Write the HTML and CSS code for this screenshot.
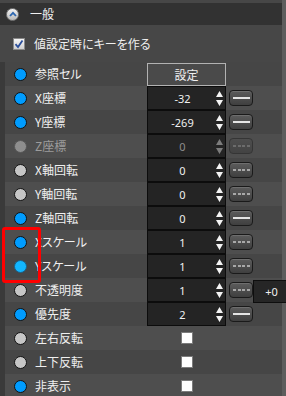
FILE: index.html
```html
<!DOCTYPE html>
<html lang="ja">
<head>
<meta charset="utf-8">
<link rel="stylesheet" href="styles.css">
</head>
<body>
<div class="panel">
  <div class="main">
    <div class="header">
      <span class="collapse"><svg width="8" height="6" viewBox="0 0 8 6"><path d="M1 5 L4 1.8 L7 5" fill="none" stroke="#2c66b0" stroke-width="1.8"/></svg></span>
      <span class="htitle">一般</span>
    </div>
    <div class="keyrow">
      <span class="cb"><svg width="10" height="10" viewBox="0 0 10 10"><path d="M1.5 5.2 L4 8 L8.5 1.5" fill="none" stroke="#2b4f9c" stroke-width="1.8"/></svg></span>
      <span class="keytxt">値設定時にキーを作る</span>
    </div>
    <div class="rows">
      <div class="row">
        <span class="dot blue"></span><span class="label">参照セル</span><span class="setbtn">設定</span>
      </div>
      <div class="row">
        <span class="dot blue"></span><span class="label">X座標</span>
        <span class="spin"><span class="val">-32</span><svg class="arrows" width="7" height="16" viewBox="0 0 7 16"><path d="M3.5 1 L7 7 L0 7Z M0 10 L7 10 L3.5 16Z"/></svg></span>
        <span class="kbtn"><span class="line"></span></span>
      </div>
      <div class="row">
        <span class="dot blue"></span><span class="label">Y座標</span>
        <span class="spin"><span class="val">-269</span><svg class="arrows" width="7" height="16" viewBox="0 0 7 16"><path d="M3.5 1 L7 7 L0 7Z M0 10 L7 10 L3.5 16Z"/></svg></span>
        <span class="kbtn"><span class="line"></span></span>
      </div>
      <div class="row disabled">
        <span class="dot off"></span><span class="label">Z座標</span>
        <span class="spin"><span class="val">0</span><svg class="arrows" width="7" height="16" viewBox="0 0 7 16"><path d="M3.5 1 L7 7 L0 7Z M0 10 L7 10 L3.5 16Z"/></svg></span>
        <span class="kbtn"><span class="dash"></span></span>
      </div>
      <div class="row">
        <span class="dot gray"></span><span class="label">X軸回転</span>
        <span class="spin"><span class="val">0</span><svg class="arrows" width="7" height="16" viewBox="0 0 7 16"><path d="M3.5 1 L7 7 L0 7Z M0 10 L7 10 L3.5 16Z"/></svg></span>
        <span class="kbtn"><span class="dash"></span></span>
      </div>
      <div class="row">
        <span class="dot gray"></span><span class="label">Y軸回転</span>
        <span class="spin"><span class="val">0</span><svg class="arrows" width="7" height="16" viewBox="0 0 7 16"><path d="M3.5 1 L7 7 L0 7Z M0 10 L7 10 L3.5 16Z"/></svg></span>
        <span class="kbtn"><span class="dash"></span></span>
      </div>
      <div class="row">
        <span class="dot blue"></span><span class="label">Z軸回転</span>
        <span class="spin"><span class="val">0</span><svg class="arrows" width="7" height="16" viewBox="0 0 7 16"><path d="M3.5 1 L7 7 L0 7Z M0 10 L7 10 L3.5 16Z"/></svg></span>
        <span class="kbtn"><span class="line"></span></span>
      </div>
      <div class="row">
        <span class="dot blue"></span><span class="label">Xスケール</span>
        <span class="spin"><span class="val">1</span><svg class="arrows" width="7" height="16" viewBox="0 0 7 16"><path d="M3.5 1 L7 7 L0 7Z M0 10 L7 10 L3.5 16Z"/></svg></span>
        <span class="kbtn"><span class="dash"></span></span>
      </div>
      <div class="row">
        <span class="dot cyan"></span><span class="label">Yスケール</span>
        <span class="spin"><span class="val">1</span><svg class="arrows" width="7" height="16" viewBox="0 0 7 16"><path d="M3.5 1 L7 7 L0 7Z M0 10 L7 10 L3.5 16Z"/></svg></span>
        <span class="kbtn"><span class="dash"></span></span>
      </div>
      <div class="row">
        <span class="dot gray"></span><span class="label">不透明度</span>
        <span class="spin"><span class="val">1</span><svg class="arrows" width="7" height="16" viewBox="0 0 7 16"><path d="M3.5 1 L7 7 L0 7Z M0 10 L7 10 L3.5 16Z"/></svg></span>
        <span class="kbtn"><span class="dash"></span></span>
        <span class="offset">+0</span>
      </div>
      <div class="row">
        <span class="dot blue"></span><span class="label">優先度</span>
        <span class="spin"><span class="val">2</span><svg class="arrows" width="7" height="16" viewBox="0 0 7 16"><path d="M3.5 1 L7 7 L0 7Z M0 10 L7 10 L3.5 16Z"/></svg></span>
        <span class="kbtn"><span class="line"></span></span>
      </div>
      <div class="row">
        <span class="dot gray"></span><span class="label">左右反転</span>
        <span class="boxcell"><span class="wbox"></span></span>
      </div>
      <div class="row">
        <span class="dot gray"></span><span class="label">上下反転</span>
        <span class="boxcell"><span class="wbox"></span></span>
      </div>
      <div class="row">
        <span class="dot blue"></span><span class="label">非表示</span>
        <span class="boxcell"><span class="wbox"></span></span>
      </div>
    </div>
  </div>
  <div class="scrollbar"></div>
</div>
<div class="highlight"></div>
</body>
</html>
```

FILE: styles.css
```css
* { box-sizing: border-box; margin: 0; padding: 0; }
html, body { width: 286px; height: 396px; overflow: hidden; }
body {
  position: relative;
  background: #474747;
  font-family: "Noto Sans CJK JP", "Noto Sans", sans-serif;
  font-size: 12px;
  color: #f0f0f0;
  font-feature-settings: "palt";
}
.panel { display: flex; height: 396px; }
.main { flex: 1; min-width: 0; padding-top: 3px; }
.scrollbar { width: 4px; background: #5d5d5d; flex: none; }

.header {
  height: 22px;
  background: #323232;
  display: flex;
  align-items: center;
  padding-left: 6px;
}
.collapse {
  width: 13px; height: 13px;
  border-radius: 50%;
  background: linear-gradient(#f4f4f4, #b8b8b8);
  border: 1px solid #7a7a7a;
  display: flex; align-items: center; justify-content: center;
}
.htitle { margin-left: 11px; line-height: 1; }

.keyrow {
  height: 37px;
  display: flex;
  align-items: center;
  padding-left: 13px;
}
.cb {
  width: 12px; height: 12px;
  border: 1px solid #8a8a8a;
  background: linear-gradient(#f6f6f6, #cfcfcf);
  display: flex; align-items: center; justify-content: center;
}
.keytxt { margin-left: 9px; line-height: 1; }

.rows { border-left: 5px solid #3a3a3a; }
.row {
  height: 24px;
  display: flex;
  align-items: center;
  background: #464646;
}
.row > * { flex: none; }
.row:nth-child(even) { background: #4e4e4e; }

.dot {
  width: 13px; height: 13px;
  margin-left: 9px;
  border-radius: 50%;
  border: 1px solid #121212;
}
.dot.blue { background: #009cff; }
.dot.gray { background: #c6c6c6; }
.dot.off { background: #8e8e8e; border-color: #565656; }
.dot.cyan { background: #12b6ff; border-color: #1b5f86; }

.label { margin-left: 8px; width: 112px; line-height: 1; white-space: nowrap; }
.disabled .label { color: #9c9c9c; }

.setbtn {
  align-self: flex-start;
  margin-top: 1px;
  width: 79px; height: 23px;
  border: 1px solid #b2b2b2;
  background: #4a4a4a;
  display: flex; align-items: center; justify-content: center;
  line-height: 1;
}

.spin {
  width: 79px; height: 24px;
  background: #242424;
  border: 1px solid #0c0c0c;
  display: flex;
  align-items: center;
}
.val {
  flex: 1;
  text-align: center;
  font-family: "Noto Sans", sans-serif;
  font-size: 11px;
  line-height: 1;
  padding-left: 1px;
}
.arrows { margin-right: 2px; fill: #f4f4f4; }
.disabled .val { color: #8e8e8e; }
.disabled .arrows { fill: #7c7c7c; }

.kbtn {
  margin-left: 3px;
  width: 24px; height: 16px;
  border-radius: 4px;
  border: 1px solid #1a1a1a;
  background: linear-gradient(#5c5c5c, #3f3f3f);
  box-shadow: inset 0 1px 0 rgba(255,255,255,0.12);
  display: flex; align-items: center; justify-content: center;
}
.kbtn .line { width: 17px; height: 2px; background: #e4e4e4; }
.kbtn .dash {
  width: 17px; height: 2px;
  background: repeating-linear-gradient(90deg, #a8a8a8 0 3px, transparent 3px 4.6px);
}
.disabled .kbtn { border-color: #353535; background: linear-gradient(#4e4e4e, #434343); box-shadow: none; }
.disabled .kbtn .dash { background: repeating-linear-gradient(90deg, #6c6c6c 0 3px, transparent 3px 4.6px); }

.offset {
  position: relative;
  z-index: 1;
  align-self: flex-start;
  margin-top: 2px;
  width: 34px; height: 23px;
  background: #262626;
  border: 1px solid #0e0e0e;
  display: flex; align-items: center; justify-content: center;
  padding-left: 3px;
  font-family: "Noto Sans", sans-serif;
  font-size: 11px;
  line-height: 1;
}

.boxcell {
  width: 79px;
  display: flex; justify-content: center;
}
.wbox {
  width: 12px; height: 12px;
  background: #ffffff;
  border: 1px solid #7c7c7c;
}

.highlight {
  position: absolute;
  left: 2px; top: 227px;
  width: 39px; height: 56px;
  border: 3px solid #ff0000;
  border-radius: 3px;
}
```
